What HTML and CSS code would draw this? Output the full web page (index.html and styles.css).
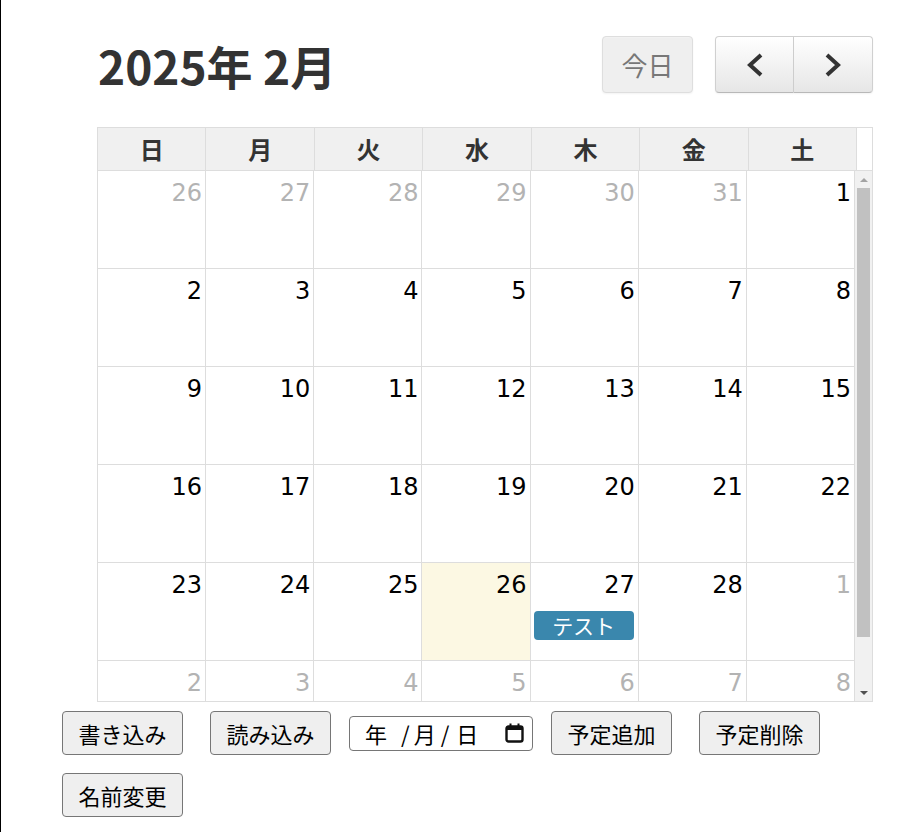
FILE: index.html
```html
<!DOCTYPE html>
<html lang="ja">
<head>
    <meta charset="UTF-8">
    <meta name="viewport" content="width=device-width, initial-scale=1.0">
    <title>カレンダー</title>
    <link rel="stylesheet" href="styles.css">
</head>
<body>
    <div class="calendar">
        <div class="toolbar">
            <h2 class="title">2025年 2月</h2>
            <div class="nav">
                <button class="btn btn-today" disabled>今日</button>
                <div class="btn-group">
                    <button class="btn btn-arrow" aria-label="前の月">
                        <svg width="18" height="24" viewBox="0 0 18 24"><polyline points="15,2 4,12 15,22" fill="none" stroke="#333" stroke-width="4"/></svg>
                    </button>
                    <button class="btn btn-arrow" aria-label="次の月">
                        <svg width="18" height="24" viewBox="0 0 18 24"><polyline points="3,2 14,12 3,22" fill="none" stroke="#333" stroke-width="4"/></svg>
                    </button>
                </div>
            </div>
        </div>

        <div class="month-view">
            <div class="week-head">
                <div class="head-cell">日</div>
                <div class="head-cell">月</div>
                <div class="head-cell">火</div>
                <div class="head-cell">水</div>
                <div class="head-cell">木</div>
                <div class="head-cell">金</div>
                <div class="head-cell">土</div>
                <div class="head-gutter"></div>
            </div>
            <div class="month-body">
                <div class="scroller">
                    <div class="week">
                        <div class="day other"><span class="day-num">26</span></div>
                        <div class="day other"><span class="day-num">27</span></div>
                        <div class="day other"><span class="day-num">28</span></div>
                        <div class="day other"><span class="day-num">29</span></div>
                        <div class="day other"><span class="day-num">30</span></div>
                        <div class="day other"><span class="day-num">31</span></div>
                        <div class="day"><span class="day-num">1</span></div>
                    </div>
                    <div class="week">
                        <div class="day"><span class="day-num">2</span></div>
                        <div class="day"><span class="day-num">3</span></div>
                        <div class="day"><span class="day-num">4</span></div>
                        <div class="day"><span class="day-num">5</span></div>
                        <div class="day"><span class="day-num">6</span></div>
                        <div class="day"><span class="day-num">7</span></div>
                        <div class="day"><span class="day-num">8</span></div>
                    </div>
                    <div class="week">
                        <div class="day"><span class="day-num">9</span></div>
                        <div class="day"><span class="day-num">10</span></div>
                        <div class="day"><span class="day-num">11</span></div>
                        <div class="day"><span class="day-num">12</span></div>
                        <div class="day"><span class="day-num">13</span></div>
                        <div class="day"><span class="day-num">14</span></div>
                        <div class="day"><span class="day-num">15</span></div>
                    </div>
                    <div class="week">
                        <div class="day"><span class="day-num">16</span></div>
                        <div class="day"><span class="day-num">17</span></div>
                        <div class="day"><span class="day-num">18</span></div>
                        <div class="day"><span class="day-num">19</span></div>
                        <div class="day"><span class="day-num">20</span></div>
                        <div class="day"><span class="day-num">21</span></div>
                        <div class="day"><span class="day-num">22</span></div>
                    </div>
                    <div class="week">
                        <div class="day"><span class="day-num">23</span></div>
                        <div class="day"><span class="day-num">24</span></div>
                        <div class="day"><span class="day-num">25</span></div>
                        <div class="day today"><span class="day-num">26</span></div>
                        <div class="day">
                            <span class="day-num">27</span>
                            <div class="event">テスト</div>
                        </div>
                        <div class="day"><span class="day-num">28</span></div>
                        <div class="day other"><span class="day-num">1</span></div>
                    </div>
                    <div class="week">
                        <div class="day other"><span class="day-num">2</span></div>
                        <div class="day other"><span class="day-num">3</span></div>
                        <div class="day other"><span class="day-num">4</span></div>
                        <div class="day other"><span class="day-num">5</span></div>
                        <div class="day other"><span class="day-num">6</span></div>
                        <div class="day other"><span class="day-num">7</span></div>
                        <div class="day other"><span class="day-num">8</span></div>
                    </div>
                </div>
                <div class="scrollbar">
                    <div class="sb-arrow sb-up"></div>
                    <div class="sb-track">
                        <div class="sb-thumb" style="height: 449px;"></div>
                    </div>
                    <div class="sb-arrow sb-down"></div>
                </div>
            </div>
        </div>
    </div>

    <div class="actions">
        <button class="action-btn">書き込み</button>
        <button class="action-btn">読み込み</button>
        <div class="date-field">
            <span class="date-text"><span class="d-part">年</span>/<span class="d-part d-month">月</span>/<span class="d-part d-day">日</span></span>
            <svg class="date-icon" width="19" height="20" viewBox="0 0 19 20">
                <rect x="1.5" y="3.5" width="16" height="15" rx="2" fill="none" stroke="#111" stroke-width="2.4"/>
                <rect x="1.5" y="3.5" width="16" height="3.5" fill="#111"/>
                <rect x="4.5" y="0.5" width="2" height="4" fill="#111"/>
                <rect x="12.5" y="0.5" width="2" height="4" fill="#111"/>
            </svg>
        </div>
        <button class="action-btn">予定追加</button>
        <button class="action-btn">予定削除</button>
        <button class="action-btn">名前変更</button>
    </div>
</body>
</html>
```

FILE: styles.css
```css
* {
    box-sizing: border-box;
}

body {
    margin: 0;
    min-height: 832px;
    border-left: 1px solid #000;
    background: #fff;
    font-family: "Noto Sans CJK JP", "Noto Sans", sans-serif;
    color: #000;
}

/* Calendar */
.calendar {
    width: 776px;
    margin: 36px 0 0 96px;
}

.toolbar {
    display: flex;
    justify-content: space-between;
    align-items: center;
    margin-bottom: 34px;
}

.title {
    margin: 0 0 0 1px;
    font-size: 46px;
    font-weight: 700;
    color: #333;
    line-height: 1;
}

.nav {
    display: flex;
    gap: 22px;
}

.btn {
    height: 57px;
    border: 1px solid #d0d0d0;
    border-bottom-color: #b8b8b8;
    border-radius: 4px;
    background: linear-gradient(#ffffff, #e6e6e6);
    box-shadow: inset 0 1px 0 rgba(255,255,255,0.2), 0 1px 2px rgba(0,0,0,0.05);
    font-family: inherit;
    cursor: pointer;
    display: flex;
    align-items: center;
    justify-content: center;
    padding: 0;
}

.btn-today {
    width: 91px;
    font-size: 26px;
    color: #777;
    background: #efefef;
    border-color: #dedede;
    cursor: default;
}

.btn-group {
    display: flex;
}

.btn-arrow {
    width: 79px;
}

.btn-group .btn-arrow:first-child {
    border-top-right-radius: 0;
    border-bottom-right-radius: 0;
}

.btn-group .btn-arrow:last-child {
    border-left: none;
    border-top-left-radius: 0;
    border-bottom-left-radius: 0;
}

.month-view {
    border: 1px solid #ddd;
}

.week-head {
    display: grid;
    grid-template-columns: repeat(7, 1fr) 15px;
    background: #f0f0f0;
    border-bottom: 1px solid #ddd;
}

.head-cell {
    height: 42px;
    border-right: 1px solid #ddd;
    text-align: center;
    font-size: 24px;
    font-weight: 700;
    color: #333;
    line-height: 42px;
}

.head-gutter {
    background: #fff;
}

.month-body {
    display: flex;
    height: 530px;
}

.scroller {
    flex: 1;
    overflow: hidden;
}

/* scrollbar drawn in flow, beside the rows */
.scrollbar {
    width: 17px;
    display: flex;
    flex-direction: column;
    background: #f1f1f1;
}

.sb-arrow {
    height: 17px;
    display: flex;
    align-items: center;
    justify-content: center;
}

.sb-arrow::before {
    content: '';
    border-left: 4px solid transparent;
    border-right: 4px solid transparent;
}

.sb-up::before {
    border-bottom: 4px solid #a3a3a3;
}

.sb-down::before {
    border-top: 4px solid #505050;
}

.sb-track {
    flex: 1;
    padding: 0 2px;
}

.sb-thumb {
    background: #c1c1c1;
}

.week {
    display: grid;
    grid-template-columns: repeat(7, 1fr);
    height: 98px;
    border-bottom: 1px solid #ddd;
}

.day {
    border-right: 1px solid #ddd;
    padding: 7px 3px 0 3px;
    display: flex;
    flex-direction: column;
    align-items: flex-end;
}

.day-num {
    font-family: "DejaVu Sans", "Noto Sans", sans-serif;
    font-size: 24px;
    line-height: 30px;
}

.day.other .day-num {
    color: #b3b3b3;
}

.day.today {
    background: #fcf8e3;
}

.event {
    align-self: stretch;
    margin: 11px 1px 0 0;
    height: 29px;
    background: #3a87ad;
    border-radius: 4px;
    color: #fff;
    font-size: 21px;
    line-height: 29px;
    text-align: center;
}

/* Bottom controls */
.actions {
    display: flex;
    flex-wrap: wrap;
    align-items: center;
    column-gap: 9px;
    row-gap: 18px;
    width: 800px;
    margin: 9px 0 0 52px;
}

.action-btn {
    height: 44px;
    width: 121px;
    margin: 0 9px;
    padding: 0;
    border: 1px solid #767676;
    border-radius: 4px;
    background: #efefef;
    font-family: inherit;
    font-size: 22px;
    color: #000;
    cursor: pointer;
}

.date-field {
    width: 184px;
    height: 35px;
    border: 1px solid #767676;
    border-radius: 4px;
    display: flex;
    align-items: center;
    justify-content: space-between;
    padding: 0 8px 0 15px;
    font-size: 22px;
}

.date-text {
    display: flex;
    align-items: center;
}

.d-part {
    margin-right: 14px;
}

.d-month {
    margin: 0 5px 0 4px;
}

.d-day {
    margin: 0 0 0 7px;
}
```
